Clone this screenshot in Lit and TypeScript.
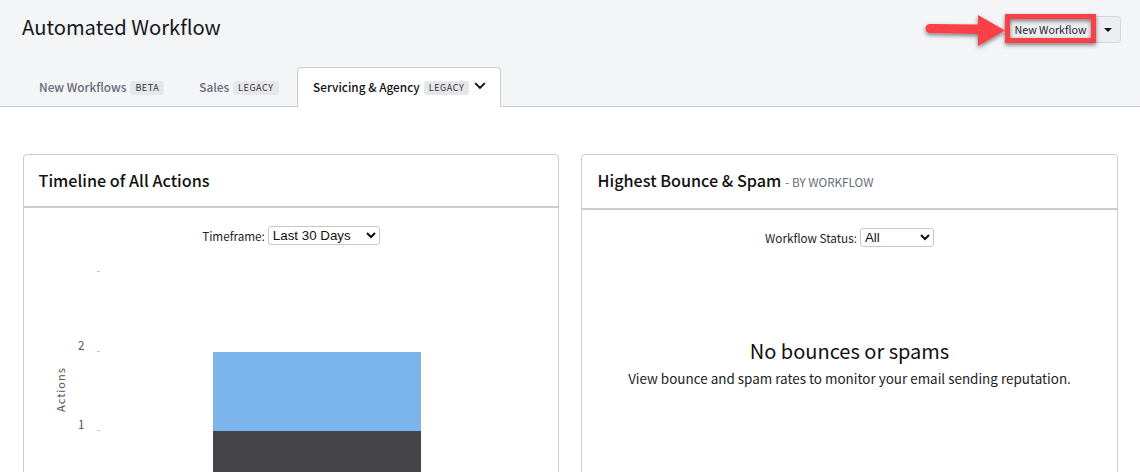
import { LitElement, html, css } from "lit";
import { customElement } from "lit/decorators.js";

@customElement("app-root")
export class AppRoot extends LitElement {
  static styles = css`
    :host { display: block; position: relative; width: 1140px; height: 472px; overflow: hidden; background: #fff; font-family: "Noto Sans CJK SC", "Noto Sans", sans-serif; color: #111; }
    .top { background: #f4f5f7; border-bottom: 1px solid #c9ccd2; height: 106px; box-sizing: content-box; display: flex; flex-direction: column; justify-content: space-between; }
    .head { display: flex; justify-content: space-between; align-items: flex-start; padding: 14px 19px 0 22px; }
    h1 { margin: 0; font-size: 20.2px; font-weight: 400; line-height: 26px; color: #16181d; }
    .btns { display: flex; margin-top: 2px; }
    .btn { height: 27px; box-sizing: border-box; background: #eceef1; border: 1px solid #d2d5da; display: flex; align-items: center; justify-content: center; }
    .main { width: 91px; padding-bottom: 1px; font-size: 10.7px; color: #1c2330; border-radius: 4px 0 0 4px; }
    .caret { width: 25px; border-left: 0; border-radius: 0 4px 4px 0; }
    .tri { width: 0; height: 0; border: 4px solid transparent; border-top: 4px solid #111; border-bottom: 0; }
    .tabs { display: flex; padding-left: 22px; height: 40px; align-items: stretch; margin-bottom: -1px; }
    .tab { display: flex; align-items: center; gap: 4px; padding: 0 16px 1px 17px; font-size: 11.8px; font-weight: 500; color: #646b78; box-sizing: border-box; height: 40px; }
    .tab.second { padding: 0 18px 1px 19px; }
    .tab.on { height: 40px; background: #fff; border: 1px solid #c9ccd2; border-bottom: 0; border-radius: 4px 4px 0 0; color: #111; padding: 0 14px 3px 15.5px; }
    .tag { font-size: 9px; font-weight: 400; letter-spacing: .55px; line-height: 14px; height: 14px; margin-top: 3px; padding: 0 5px; background: #e5e7ea; border-radius: 3px; color: #333; }
    .chev { margin-left: 1px; display: block; }
    .cards { display: flex; gap: 22px; padding: 47px 22px 0 23px; }
    .card { flex: 1; height: 400px; border: 1px solid #c9ccd2; border-radius: 4px; box-sizing: border-box; }
    .card.left { flex: 0 0 536px; }
    .card.right { flex: 0 0 537px; }
    .ch { height: 53px; box-sizing: border-box; border-bottom: 2px solid #c9ccd2; padding: 0 14.5px 2px; display: flex; align-items: center; gap: 4px; font-size: 16.2px; font-weight: 500; color: #111; }
    .right .ch { height: 55px; padding: 0 15.5px 3px; }
    .sub { font-size: 11.7px; font-weight: 400; color: #646b78; padding-top: 3px; }
    .filter { display: flex; justify-content: center; align-items: center; gap: 3px; font-size: 11.7px; color: #222; margin-top: 17px; height: 20px; }
    select { font-family: "Liberation Sans", Arial, sans-serif; font-size: 13.33px; height: 19px; padding: 0; background: #fff; border: 1px solid #c5c8cc; border-radius: 3px; color: #111; }
    .s1 { width: 112px; }
    .s2 { width: 74px; }
    .chart { display: block; margin-top: 10px; }
    .empty { text-align: center; margin-top: 90px; }
    .empty h2 { margin: 0; font-size: 20px; font-weight: 400; line-height: 28px; color: #111; }
    .empty p { margin: 0; font-size: 13.45px; line-height: 26px; color: #222; }
    .note { position: absolute; left: 0; top: 0; pointer-events: none; }
  `;

  render() {
    return html`
      <div class="top">
        <div class="head">
          <h1>Automated Workflow</h1>
          <div class="btns">
            <div class="btn main">New Workflow</div>
            <div class="btn caret"><span class="tri"></span></div>
          </div>
        </div>
        <div class="tabs">
          <div class="tab">New Workflows <span class="tag">BETA</span></div>
          <div class="tab second">Sales <span class="tag">LEGACY</span></div>
          <div class="tab on">Servicing &amp; Agency <span class="tag">LEGACY</span>
            <svg class="chev" width="12" height="8" viewBox="0 0 12 8"><path d="M1.2 1.2 6 6 10.8 1.2" fill="none" stroke="#111" stroke-width="1.9"/></svg>
          </div>
        </div>
      </div>
      <div class="cards">
        <section class="card left">
          <div class="ch">Timeline of All Actions</div>
          <div class="filter">Timeframe:
            <select class="s1"><option>Last 30 Days</option></select>
          </div>
          <svg class="chart" width="534" height="230" viewBox="0 0 534 230">
            <g fill="#c4c4c4">
              <rect x="73" y="16" width="3" height="1"/>
              <rect x="73" y="96" width="3" height="1"/>
              <rect x="73" y="175" width="3" height="1"/>
            </g>
            <g font-family="Noto Sans CJK SC, sans-serif" font-size="11.5" fill="#555">
              <text x="54" y="95">2</text>
              <text x="54" y="174">1</text>
              <text transform="translate(41 157) rotate(-90)" font-size="11" letter-spacing="1">Actions</text>
            </g>
            <rect x="189" y="97" width="208" height="79" fill="#7cb5ec"/>
            <rect x="189" y="176" width="208" height="60" fill="#434348"/>
          </svg>
        </section>
        <section class="card right">
          <div class="ch">Highest Bounce &amp; Spam <span class="sub">- BY WORKFLOW</span></div>
          <div class="filter">Workflow Status:
            <select class="s2"><option>All</option></select>
          </div>
          <div class="empty">
            <h2>No bounces or spams</h2>
            <p>View bounce and spam rates to monitor your email sending reputation.</p>
          </div>
        </section>
      </div>
      <svg class="note" width="1140" height="60" viewBox="0 0 1140 60">
        <defs>
          <filter id="sh" x="-10%" y="-30%" width="120%" height="170%">
            <feDropShadow dx="0" dy="2" stdDeviation="2.2" flood-color="#000" flood-opacity=".5"/>
          </filter>
        </defs>
        <g filter="url(#sh)" fill="#f8404a">
          <path d="M930 24 978 24.5 978 15 1005 30.5 978 46 978 34 930 33a4.5 4.5 0 0 1 0-9Z"/>
          <rect x="1007.5" y="16.5" width="86" height="24" fill="none" stroke="#f8404a" stroke-width="5"/>
        </g>
      </svg>
    `;
  }
}
